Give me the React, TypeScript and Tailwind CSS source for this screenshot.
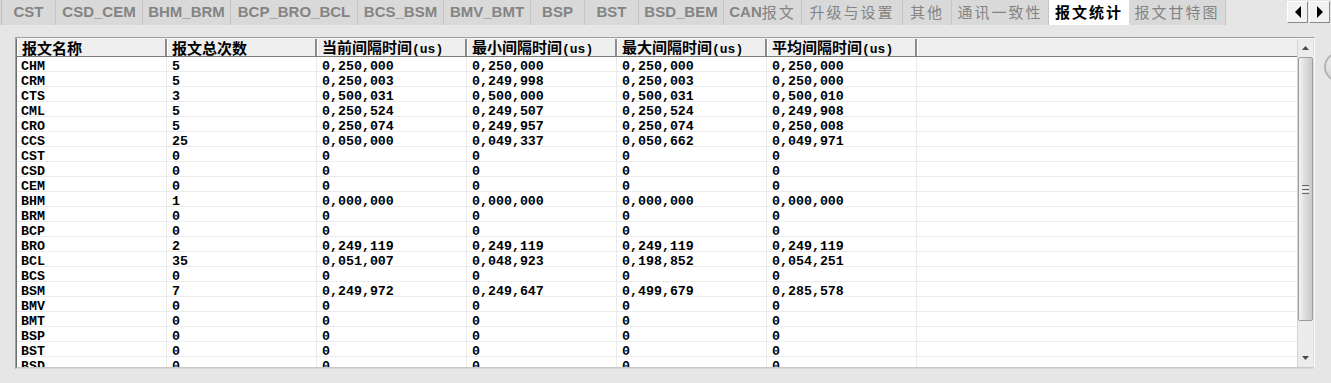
const tabs = [
  { label: "CST", w: "w-[54px]" },
  { label: "CSD_CEM", w: "w-[87px]" },
  { label: "BHM_BRM", w: "w-[88px]" },
  { label: "BCP_BRO_BCL", w: "w-[127px]" },
  { label: "BCS_BSM", w: "w-[86px]" },
  { label: "BMV_BMT", w: "w-[87px]" },
  { label: "BSP", w: "w-[54px]" },
  { label: "BST", w: "w-[54px]" },
  { label: "BSD_BEM", w: "w-[85px]" },
  { label: "CAN报文", w: "w-[78px]" },
  { label: "升级与设置", w: "w-[101px]" },
  { label: "其他", w: "w-[49px]" },
  { label: "通讯一致性", w: "w-[97px]" },
  { label: "报文统计", w: "w-[80px]", active: true },
  { label: "报文甘特图", w: "w-[97px]" },
];

const headers = [
  "报文名称",
  "报文总次数",
  "当前间隔时间(us)",
  "最小间隔时间(us)",
  "最大间隔时间(us)",
  "平均间隔时间(us)",
];

const rows: string[][] = [
  ["CHM", "5", "0,250,000", "0,250,000", "0,250,000", "0,250,000"],
  ["CRM", "5", "0,250,003", "0,249,998", "0,250,003", "0,250,000"],
  ["CTS", "3", "0,500,031", "0,500,000", "0,500,031", "0,500,010"],
  ["CML", "5", "0,250,524", "0,249,507", "0,250,524", "0,249,908"],
  ["CRO", "5", "0,250,074", "0,249,957", "0,250,074", "0,250,008"],
  ["CCS", "25", "0,050,000", "0,049,337", "0,050,662", "0,049,971"],
  ["CST", "0", "0", "0", "0", "0"],
  ["CSD", "0", "0", "0", "0", "0"],
  ["CEM", "0", "0", "0", "0", "0"],
  ["BHM", "1", "0,000,000", "0,000,000", "0,000,000", "0,000,000"],
  ["BRM", "0", "0", "0", "0", "0"],
  ["BCP", "0", "0", "0", "0", "0"],
  ["BRO", "2", "0,249,119", "0,249,119", "0,249,119", "0,249,119"],
  ["BCL", "35", "0,051,007", "0,048,923", "0,198,852", "0,054,251"],
  ["BCS", "0", "0", "0", "0", "0"],
  ["BSM", "7", "0,249,972", "0,249,647", "0,499,679", "0,285,578"],
  ["BMV", "0", "0", "0", "0", "0"],
  ["BMT", "0", "0", "0", "0", "0"],
  ["BSP", "0", "0", "0", "0", "0"],
  ["BST", "0", "0", "0", "0", "0"],
  ["BSD", "0", "0", "0", "0", "0"],
];

const latinFont = "font-['Liberation_Sans',Arial,sans-serif]";
const cjkFont = "font-['Noto_Sans_CJK_SC',sans-serif]";

// latin part bold, chinese part lighter with spacing
const TabLabel = ({ label, active }: { label: string; active?: boolean }) => {
  const parts = label.match(/[A-Za-z_]+|[^A-Za-z_]+/g) || [];
  return (
    <span className="flex items-center">
      {parts.map((p, i) =>
        /[A-Za-z_]/.test(p) ? (
          <span key={i} className={`${latinFont} text-[15px] font-bold`}>
            {p}
          </span>
        ) : (
          <span
            key={i}
            className={`${cjkFont} text-[15px] tracking-[2px] ${
              active ? "font-bold" : "font-normal"
            }`}
          >
            {p}
          </span>
        )
      )}
    </span>
  );
};

const HeaderLabel = ({ text }: { text: string }) => {
  const idx = text.indexOf("(");
  if (idx < 0) return <span className={`${cjkFont} text-[15px] leading-[17px]`}>{text}</span>;
  return (
    <span className="flex items-baseline leading-[17px]">
      <span className={`${cjkFont} text-[15px]`}>{text.slice(0, idx)}</span>
      <span className="font-['Liberation_Mono',monospace] text-[13px]">
        {text.slice(idx)}
      </span>
    </span>
  );
};

const colW = [
  "w-[150px]",
  "w-[150px]",
  "w-[150px]",
  "w-[150px]",
  "w-[150px]",
  "w-[150px]",
];

const App = () => {
  return (
    <div className="relative w-[1331px] h-[383px] overflow-hidden bg-[#e6e6e6] select-none">
      {/* tab strip */}
      <div className="flex h-[25px]">
        <div className="flex bg-[#d9d9d9]">
          <div className="w-[2px] border-r border-[#bdbdbd]" />
          {tabs.map((t) => (
            <div
              key={t.label}
              className={`${t.w} flex items-center justify-center ${
                t.active
                  ? "bg-white text-black"
                  : "border-r border-[#c4c4c4] text-[#848484]"
              }`}
            >
              <TabLabel label={t.label} active={t.active} />
            </div>
          ))}
        </div>
        <div className="flex-1" />
        <div className="flex gap-px pt-[1px] pr-px h-[24px]">
          {["left", "right"].map((d) => (
            <div
              key={d}
              className="w-[21px] h-[22px] flex items-center justify-center bg-[#f2f2f2] border border-t-white border-l-white border-r-[#8a8a8a] border-b-[#8a8a8a]"
            >
              <svg width="8" height="12" viewBox="0 0 8 12">
                {d === "left" ? (
                  <polygon points="7,0 7,12 1,6" fill="#000" />
                ) : (
                  <polygon points="1,0 1,12 7,6" fill="#000" />
                )}
              </svg>
            </div>
          ))}
        </div>
      </div>

      {/* grid frame */}
      <div className="ml-[15px] mt-[12px] w-[1300px] h-[332px] border border-t-[#a0a0a0] border-l-[#a0a0a0] border-r-[#f8f8f8] border-b-[#d8d8d8]">
        <div className="flex h-full border border-t-[#f4f4f4] border-l-[#6e6e6e] border-r-[#e0e0e0] border-b-[#c8c8c8]">
          <div className="w-[1280px] flex flex-col bg-white">
            {/* header */}
            <div className="flex h-[18px] shrink-0 bg-[#efefef] border-b border-[#7d7d7d] text-black font-bold">
              {headers.map((h, i) => (
                <div
                  key={h}
                  className={`${colW[i]} flex items-center pl-[5px] border-r-2 border-r-[#8c8c8c] shadow-[inset_1px_0_0_#ffffff] whitespace-nowrap`}
                >
                  <HeaderLabel text={h} />
                </div>
              ))}
              <div className="flex-1 shadow-[inset_1px_0_0_#ffffff]" />
            </div>

            {/* body */}
            <div className="flex-1 min-h-0 overflow-hidden font-['Liberation_Mono','Courier_New',monospace] text-[13.3px] font-bold text-black">
              {rows.map((r) => (
                <div key={r[0]} className="flex h-[15px] border-b border-[#ebebeb]">
                  {r.map((c, i) => (
                    <div
                      key={i}
                      className={`${colW[i]} flex items-center pt-[5px] ${
                        i === 0 ? "pl-[4px]" : "pl-[5px]"
                      } border-r border-[#ebebeb] leading-none whitespace-nowrap`}
                    >
                      {c}
                    </div>
                  ))}
                  <div className="flex-1" />
                </div>
              ))}
            </div>
          </div>

          {/* scrollbar */}
          <div className="w-[16px] flex flex-col bg-[#ececec] border-l border-[#d4d4d4]">
            <div className="h-[18px] shrink-0 flex items-center justify-center">
              <svg width="7" height="4" viewBox="0 0 7 4">
                <polygon points="0,4 7,4 3.5,0" fill="#4a4a4a" />
              </svg>
            </div>
            <div className="h-[264px] shrink-0 flex items-center justify-center rounded-[2px] border border-[#9c9c9c] bg-gradient-to-r from-[#f4f4f4] via-[#dcdcdc] to-[#c9c9c9]">
              <div className="flex flex-col gap-[1px]">
                <div className="w-[7px] h-[1px] bg-[#666]" />
                <div className="w-[7px] h-[1px] bg-[#f8f8f8]" />
                <div className="w-[7px] h-[1px] bg-[#666]" />
                <div className="w-[7px] h-[1px] bg-[#f8f8f8]" />
                <div className="w-[7px] h-[1px] bg-[#666]" />
              </div>
            </div>
            <div className="flex-1 flex items-end justify-center pb-[7px]">
              <svg width="7" height="4" viewBox="0 0 7 4">
                <polygon points="0,0 7,0 3.5,4" fill="#4a4a4a" />
              </svg>
            </div>
          </div>
        </div>
      </div>

      {/* partially hidden floating button at the right edge */}
      <div className="absolute left-[1324px] top-[52px] w-[30px] h-[30px] rounded-full border-2 border-[#b4b4b4] bg-gradient-to-b from-[#f0f0f0] to-[#d4d4d4]" />
    </div>
  );
};

export default App;
